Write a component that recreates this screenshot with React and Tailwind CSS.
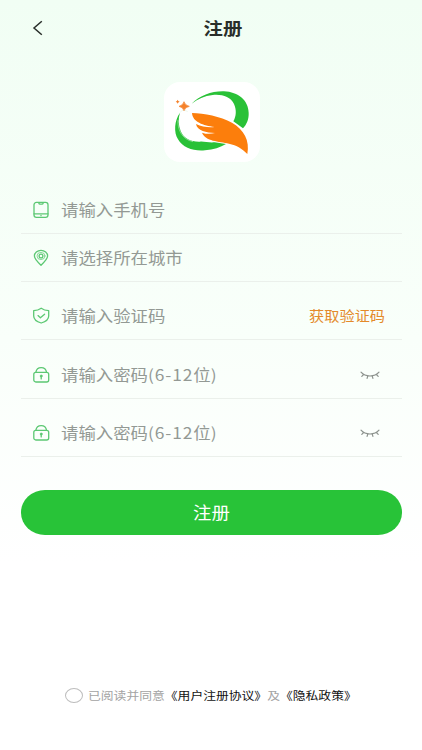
import React, { useState } from 'react';

const ICON = {
  fill: 'none',
  stroke: '#5cc873',
  strokeWidth: 1.3,
  strokeLinecap: 'round',
  strokeLinejoin: 'round',
};

function PhoneIcon() {
  return (
    <svg width="18" height="18" viewBox="0 0 18 18" {...ICON}>
      <rect x="2" y="1.4" width="14" height="15" rx="2.4" />
      <path d="M2 12.8h14M6.800 2q.3 1.200 1.100 1.200h2.200q.8 0 1.100-1.200M9 14.500v.2" />
    </svg>
  );
}

function PinIcon() {
  return (
    <svg width="18" height="18" viewBox="0 0 18 18" {...ICON}>
      <path d="M9 16.200C5.600 13.100 2.400 10.200 2.400 7.100a6.600 5.700 0 0 1 13.200 0C15.600 10.200 12.400 13.100 9 16.200z" />
      <ellipse cx="9" cy="7" rx="4" ry="3.600" strokeWidth="0.7" />
      <circle cx="9" cy="7" r="1.900" />
    </svg>
  );
}

function ShieldIcon() {
  return (
    <svg width="18" height="18" viewBox="0 0 18 18" {...ICON}>
      <path d="M9.200 1.200C7 2.800 4.700 3.500 1.700 3.600v5.300c0 3.600 3.700 5.900 7.500 7.100 3.800-1.200 7.500-3.500 7.500-7.100V3.600C13.700 3.500 11.400 2.800 9.200 1.200z" />
      <path d="M6 8.600l2.400 2.200 4.200-3.600" />
    </svg>
  );
}

function LockIcon() {
  return (
    <svg width="18" height="18" viewBox="0 0 18 18" {...ICON}>
      <rect x="1.800" y="6.300" width="14.900" height="9.700" rx="2" />
      <path d="M3.900 6.200C4.300 3.400 6.300 1.600 9.200 1.600s4.900 1.800 5.300 4.600" />
      <circle cx="9.200" cy="10" r="1" fill="#5cc873" strokeWidth="0.8" />
      <path d="M9.200 10.200v2.700" />
    </svg>
  );
}

function ClosedEyeIcon() {
  return (
    <svg width="20" height="10" viewBox="0 0 20 10" fill="none" stroke="#8d938e" strokeWidth="1.200" strokeLinecap="round">
      <path d="M1 2.200C3 4.500 6.200 6 10 6s7-1.500 9-3.800M3.600 4.500L1.800 6.300M7.800 5.900L7.100 8.300M12.200 5.900l.7 2.400M16.400 4.500l1.800 1.800" />
    </svg>
  );
}

function Logo() {
  return (
    <div className="w-24 h-20 rounded-2xl bg-white overflow-hidden">
      <svg width="96" height="80" viewBox="42 36 288 240">
        <path d="M125 101C150 76 185 63 222 64C265 66 295 91 296 128C297 147 290 163 279 175L250 154C259 139 260 119 252 102C242 80 215 72 188 75C163 78 143 87 125 101z" fill="#29c137" />
        <path d="M90 128C73 151 71 187 84 208C99 234 131 244 165 241C191 239 211 232 228 222L194 217C178 219 163 214 150 215C123 216 101 205 92 183C85 165 84 145 90 128z" fill="#29c137" />
        <path d="M90 128C94 121 101 118 113 125M84 150C82 175 94 208 129 215" fill="none" stroke="#d7eed9" strokeWidth="1.500" />
        <path d="M126 129C162 130 211 139 246 158C282 179 300 211 292 252C277 236 260 226 237 221C207 214 166 214 156 188C170 193 184 192 195 189C169 188 142 183 138 162C156 171 177 173 194 171C160 166 128 157 126 129z" fill="#fc7e0c" />
        <path d="M102 95Q105 106 118 109Q105 112 102 122Q99 112 87 109Q99 106 102 95z" fill="#f5812a" stroke="#f5812a" strokeWidth="2" />
        <path d="M83 89Q84 94 89 95Q84 96 83 101Q82 96 77 95Q82 94 83 89z" fill="#f5812a" />
      </svg>
    </div>
  );
}

const FIELDS = [
  { id: 'phone', icon: PhoneIcon, label: '请输入手机号', row: 'h-12' },
  { id: 'city', icon: PinIcon, label: '请选择所在城市', row: 'h-12' },
  { id: 'code', icon: ShieldIcon, label: '请输入验证码', row: 'h-[58px]', action: '获取验证码' },
  { id: 'password', icon: LockIcon, label: '请输入密码', range: '(6-12', unit: '位)', row: 'h-[59px]' },
  { id: 'confirm', icon: LockIcon, label: '请输入密码', range: '(6-12', unit: '位)', row: 'h-[58px]' },
];

function Field({ icon: Icon, label, range, unit, row, action }) {
  return (
    <div className={`${row} flex items-end border-b border-[#ebf0eb]`}>
      <div className="flex h-[46px] w-full items-center pl-[11px] pr-[17px]">
        <Icon />
        <span className="ml-[11px] flex-1 text-[17.4px] leading-none text-[#939994] scale-y-90 whitespace-nowrap">
          {label}
          {range && <span className="tracking-[0.9px]">{range}</span>}
          {unit}
        </span>
        {action && <button className="text-[15.2px] leading-none text-[#e48a2a] scale-y-90">{action}</button>}
        {range && (
          <button className="mr-[5px]">
            <ClosedEyeIcon />
          </button>
        )}
      </div>
    </div>
  );
}

export default function App() {
  const [agreed, setAgreed] = useState(false);

  return (
    <div className="h-[750px] w-full flex flex-col bg-linear-to-b from-[#f1fef4] via-[#f9fffa] via-45% to-white to-75% font-['Noto_Sans_CJK_SC',sans-serif]">
      <header className="grid grid-cols-[1fr_auto_1fr] items-center h-14 pl-8 pr-2">
        <button className="justify-self-start">
          <svg width="12" height="16" viewBox="0 0 12 16" fill="none" stroke="#292e2a" strokeWidth="1.500">
            <path d="M9.800 1.200L2 8l7.800 6.800" />
          </svg>
        </button>
        <h1 className="text-[19.4px] leading-none font-bold text-[#292e2a] scale-y-90">注册</h1>
      </header>

      <div className="flex justify-center pt-[26px] pl-0.5">
        <Logo />
      </div>

      <div className="mt-6 ml-[21px] mr-5">
        {FIELDS.map(f => (
          <Field key={f.id} {...f} />
        ))}
      </div>

      <button className="mt-[33px] ml-[21px] mr-5 h-[44.5px] shrink-0 rounded-[24px/22.25px] bg-[#28c338] text-white text-[18.4px] leading-none">
        <span className="inline-block scale-y-90">注册</span>
      </button>

      {/* Terms */}
      <footer className="mt-auto mb-[45px] flex h-5 items-center pl-[65px] text-[12.8px] leading-none whitespace-nowrap">
        <button
          onClick={() => setAgreed(!agreed)}
          className={`w-[18px] h-[15px] mr-[5px] rounded-[50%] border border-[#bdbdbd] ${agreed ? 'bg-[#28c338]' : 'bg-white'}`}
        />
        <p className="relative top-px text-[#a3a3a3] scale-y-[0.86]">
          已阅读并同意<span className="text-[#111111]">《用户注册协议》</span>及<span className="text-[#111111]">《隐私政策》</span>
        </p>
      </footer>
    </div>
  );
}
